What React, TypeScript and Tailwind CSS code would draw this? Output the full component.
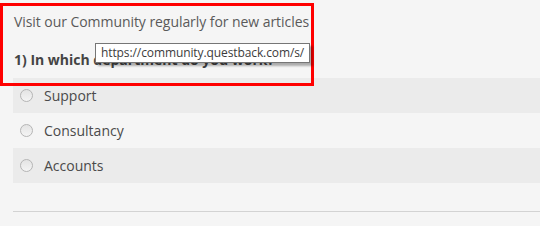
import React from 'react'

const opcoes = ['Support', 'Consultancy', 'Accounts']

function Radio() {
  return (
    <span className="block h-[13px] w-[13px] rounded-full border border-[#b5b5b5] bg-gradient-to-b from-[#e4e4e4] to-[#f4f4f4]" />
  )
}

export default function App() {
  return (
    <div className="relative h-[226px] w-[540px] overflow-hidden bg-[#f5f5f5] font-['Open_Sans',sans-serif] text-[#555]">
      {/* intro + question */}
      <div className="relative ml-0 mt-[3px] h-[83px] w-[314px] border-[3px] border-[#ff0000] pl-[11px]">
        <p className="whitespace-nowrap pt-[6px] text-[14px] leading-[20px] tracking-[-0.06px] text-[#5a5a5a]">Visit our Community regularly for new articles</p>
        <p className="mt-[18px] whitespace-nowrap text-[14px] font-bold leading-[20px] text-[#444]">1) In which department do you work?</p>
      </div>

      {/* tooltip */}
      <div className="absolute left-[95px] top-[43px] whitespace-nowrap border border-[#767676] bg-white px-[5px] text-[12px] leading-[18px] tracking-[-0.1px] text-[#3c3c3c] shadow-[3px_3px_2px_rgba(0,0,0,0.3)]">
        https://community.questback.com/s/
      </div>

      {/* options */}
      <div className="-mt-[8px] ml-[13px]">
        {opcoes.map((o, i) => (
          <div key={o} className={`flex h-[35px] items-center ${i % 2 === 0 ? 'bg-[#ebebeb]' : 'bg-[#f5f5f5]'}`}>
            <span className="ml-[7px] mr-[11px]"><Radio /></span>
            <span className="text-[14px] text-[#4a4a4a]">{o}</span>
          </div>
        ))}
        <div className="mt-[28px] h-px bg-[#d3d3d3]" />
      </div>
    </div>
  )
}
